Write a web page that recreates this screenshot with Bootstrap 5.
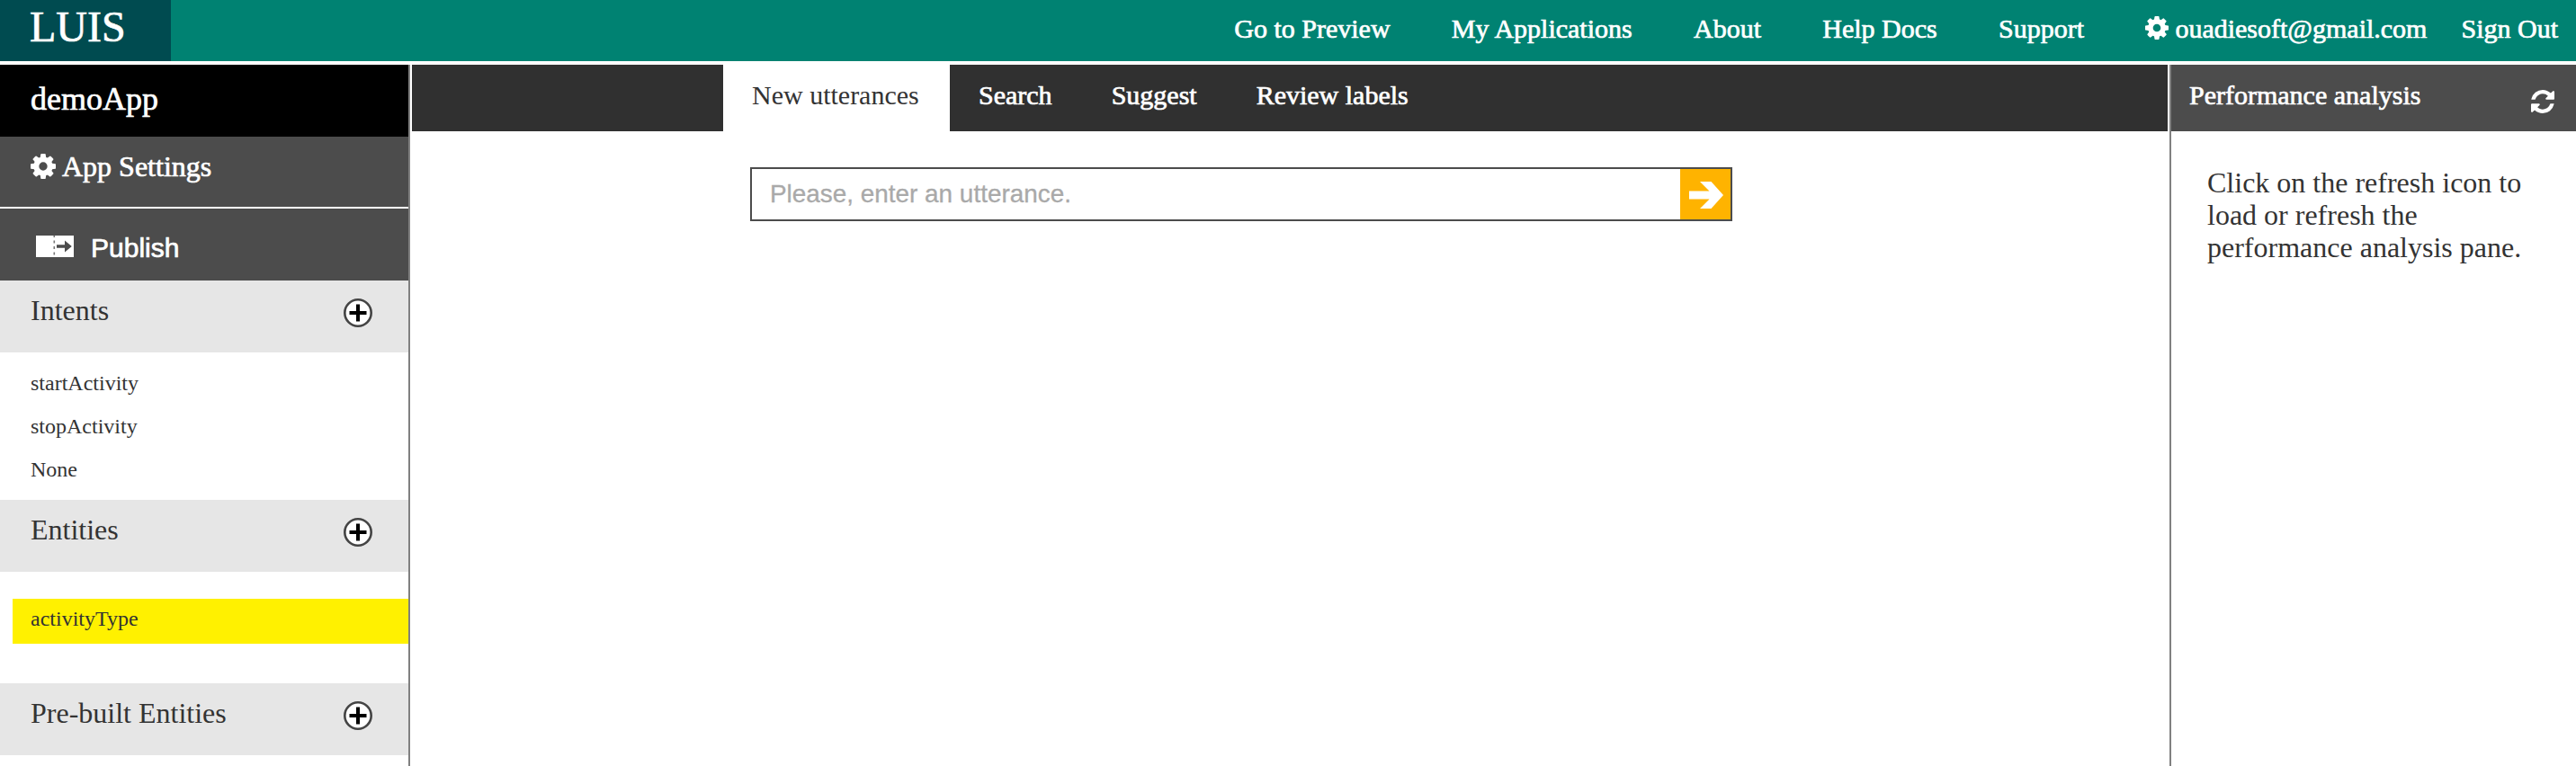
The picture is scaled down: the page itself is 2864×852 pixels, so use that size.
<!DOCTYPE html>
<html lang="en">
<head>
<meta charset="utf-8">
<meta name="viewport" content="width=device-width, initial-scale=1">
<title>LUIS - demoApp</title>
<link href="https://cdn.jsdelivr.net/npm/bootstrap@5.3.0/dist/css/bootstrap.min.css" rel="stylesheet">
<style>
  body { font-family: "Liberation Serif", "Times New Roman", serif; font-size: 30px; color: #333; background: #fff; }
  a { color: inherit; text-decoration: none; }
  svg { display: block; flex: none; }
  .light-text { color: #fff; -webkit-text-stroke: .7px #fff; }
  .topbar { height: 68px; background: #008272; margin-bottom: 4px; }
  .brand { width: 190px; padding-left: 33px; background: #004b50; font-size: 48px; line-height: 60px; }
  .topnav { gap: 68.3px; line-height: 64px; padding-right: 20px; }
  .account { gap: 38px; }
  .profile { gap: 7px; }
  .profile svg { margin-top: 18px; }
  .workspace { height: 780px; }
  .sidebar { width: 456px; border-right: 2px solid #808080; font-size: 32px; margin-right: 2px; }
  .side-row { height: 80px; padding-left: 34px; padding-right: 40px; line-height: 66px; }
  .app-title { background: #000; font-size: 36px; line-height: 76px; }
  .side-action { background: #4c4c4c; }
  .settings { border-bottom: 2px solid #fff; gap: 7px; }
  .settings svg { margin-top: 19px; }
  .publish { padding-left: 40px; gap: 19px; font: 30px/88px "Liberation Sans", Arial, sans-serif; }
  .publish svg { margin-top: 30px; }
  .side-head { background: #e6e6e6; }
  .side-head svg { margin-top: 20px; }
  .side-list { font-size: 24px; line-height: 48px; padding: 10px 0 10px 34px; }
  .entity-list { padding: 30px 0 44px 14px; }
  .entity { height: 50px; padding-left: 20px; background: #fff100; font-size: 24px; line-height: 44px; }
  .tabs { height: 74px; padding-left: 346px; background: #303030; line-height: 68px; }
  .tabs a { padding: 0 34px 0 32px; }
  .tabs .current { background: #fff; color: #333; -webkit-text-stroke: 0; width: 252px; }
  .utterance { width: 1092px; height: 60px; margin: 40px 0 0 376px; border: 2px solid #4c4c4c; }
  .utterance input { padding: 0 0 0 20px; border: 0; outline: 0; font: 27.9px "Liberation Sans", Arial, sans-serif; min-width: 0; }
  .utterance input::placeholder { color: #a9a9a9; opacity: 1; -webkit-text-stroke: .3px #a9a9a9; }
  .utterance button { width: 56px; padding: 0; border: 0; background: #ffb300; }
  .analysis { width: 452px; border-left: 2px solid #808080; margin-left: 2px; }
  .analysis-head { height: 74px; padding: 0 24px 0 20px; background: #4c4c4c; line-height: 68px; }
  .analysis-head svg { margin-top: 28px; }
  .analysis p { margin: 39px 40px 0; font-size: 32px; line-height: 36px; }
</style>
</head>
<body class="overflow-hidden">
<svg width="0" height="0" class="position-absolute">
  <symbol id="cog" viewBox="128 128 1536 1536"><path fill="#fff" d="M1152 896q0-106-75-181t-181-75-181 75-75 181 75 181 181 75 181-75 75-181zm512-109v222q0 12-8 23t-20 13l-185 28q-19 54-39 91 35 50 107 138 10 12 10 25t-9 23q-27 37-99 108t-94 71q-12 0-26-9l-138-108q-44 23-91 38-16 136-29 186-7 28-36 28h-222q-14 0-24.5-8.5t-11.5-21.5l-28-184q-49-16-90-37l-141 107q-10 9-25 9-14 0-25-11-126-114-165-168-7-10-7-23 0-12 8-23 15-21 51-66.5t54-70.5q-27-50-41-99l-183-27q-13-2-21-12.5t-8-23.5v-222q0-12 8-23t19-13l186-28q14-46 39-92-40-57-107-138-10-12-10-24 0-10 9-23 26-36 98.5-107.5t94.5-71.5q13 0 26 10l138 107q44-23 91-38 16-136 29-186 7-28 36-28h222q14 0 24.5 8.5t11.5 21.5l28 184q49 16 90 37l142-107q9-9 24-9 13 0 25 10 129 119 165 170 7 8 7 22 0 12-8 23-15 21-51 66.5t-54 70.5q26 50 41 98l183 28q13 2 21 12.5t8 23.5z"/></symbol>
  <symbol id="plus" viewBox="0 0 32 32"><circle cx="16" cy="16" r="14.7" fill="#fff" stroke="#444" stroke-width="2.6"/><path d="M6.500 16h19M16 6.500v19" stroke="#000" stroke-width="4"/></symbol>
</svg>

<header class="topbar d-flex justify-content-between light-text">
  <a href="#" class="brand">LUIS</a>
  <nav class="topnav d-flex text-nowrap">
    <a href="#">Go to Preview</a>
    <a href="#">My Applications</a>
    <a href="#">About</a>
    <a href="#">Help Docs</a>
    <a href="#">Support</a>
    <div class="account d-flex">
      <a href="#" class="profile d-flex"><svg width="26" height="26"><use href="#cog"/></svg>ouadiesoft@gmail.com</a>
      <a href="#">Sign Out</a>
    </div>
  </nav>
</header>

<div class="workspace d-flex">
  <aside class="sidebar flex-shrink-0">
    <div class="side-row app-title light-text">demoApp</div>
    <a href="#" class="side-row side-action settings d-flex light-text"><svg width="28" height="28"><use href="#cog"/></svg>App Settings</a>
    <a href="#" class="side-row side-action publish d-flex light-text">
      <svg width="42" height="24" viewBox="0 0 42 24"><path fill="#fff" d="M0 0h42v24H0z"/><path d="M20.3 0v24" stroke="#777" stroke-width="1.6" stroke-dasharray="3 3.5" stroke-dashoffset="1"/><path fill="#4c4c4c" d="M23 10.2h9V5.500l7.800 6.500-7.800 6.500v-4.700h-9z"/></svg>Publish</a>
    <div class="side-row side-head d-flex justify-content-between">Intents<svg width="32" height="32"><use href="#plus"/></svg></div>
    <div class="side-list d-flex flex-column">
      <a href="#">startActivity</a><a href="#">stopActivity</a><a href="#">None</a>
    </div>
    <div class="side-row side-head d-flex justify-content-between">Entities<svg width="32" height="32"><use href="#plus"/></svg></div>
    <div class="entity-list"><a href="#" class="entity d-block">activityType</a></div>
    <div class="side-row side-head d-flex justify-content-between">Pre-built Entities<svg width="32" height="32"><use href="#plus"/></svg></div>
  </aside>

  <main class="flex-grow-1">
    <nav class="tabs d-flex light-text">
      <a href="#" class="current">New utterances</a>
      <a href="#">Search</a>
      <a href="#">Suggest</a>
      <a href="#">Review labels</a>
    </nav>
    <form class="utterance d-flex">
      <input class="flex-grow-1" type="text" placeholder="Please, enter an utterance.">
      <button type="button" aria-label="Submit"><svg width="56" height="56" viewBox="0 0 56 56"><path fill="#fff" d="M10 24.500h22.500L22 14h12.500L48 29 34.500 44H22l10.500-10.500H10z"/></svg></button>
    </form>
  </main>

  <aside class="analysis flex-shrink-0">
    <div class="analysis-head d-flex justify-content-between light-text">Performance analysis
      <svg width="26" height="26" viewBox="128 128 1536 1536"><path fill="#fff" d="M1639 1056q0 5-1 7-64 268-268 434.500t-478 166.500q-146 0-282.500-55t-243.500-157l-129 129q-19 19-45 19t-45-19-19-45v-448q0-26 19-45t45-19h448q26 0 45 19t19 45-19 45l-137 137q71 66 161 102t187 36q134 0 250-65t186-179q11-17 53-117 8-23 30-23h192q13 0 22.500 9.500t9.500 22.500zm25-800v448q0 26-19 45t-45 19h-448q-26 0-45-19t-19-45 19-45l138-138q-148-137-349-137-134 0-250 65t-186 179q-11 17-53 117-8 23-30 23h-199q-13 0-22.500-9.500t-9.500-22.500v-7q65-268 270-434.500t480-166.500q146 0 284 55.500t245 156.500l130-129q19-19 45-19t45 19 19 45z"/></svg>
    </div>
    <p>Click on the refresh icon to load or refresh the performance analysis pane.</p>
  </aside>
</div>
<script src="https://cdn.jsdelivr.net/npm/bootstrap@5.3.0/dist/js/bootstrap.bundle.min.js"></script>
</body>
</html>
